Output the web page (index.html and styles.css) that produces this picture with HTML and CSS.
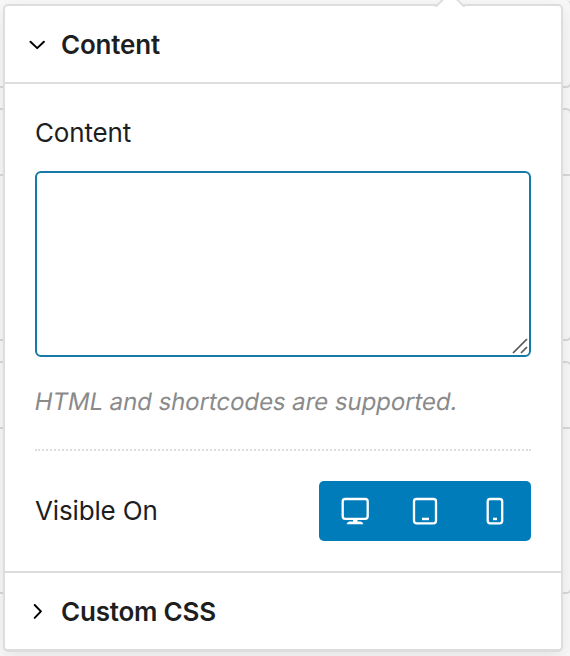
FILE: index.html
```html
<!DOCTYPE html>
<html lang="en">
<head>
<meta charset="utf-8">
<title>Content options</title>
<link rel="stylesheet" href="styles.css">
</head>
<body>
<div class="backdrop">
  <div class="card card-first"></div>
  <div class="card"><div class="card-head"></div></div>
  <div class="card"><div class="card-head"></div></div>
</div>
<main class="panel">
  <svg class="arrow" width="30" height="8" viewBox="0 0 30 8"><path d="M0 8 8 0h14l8 8z" fill="#fff"/><path d="M0 7h1.500l7-7M30 7h-1.500l-7-7" fill="none" stroke="#ddd" stroke-width="2"/></svg>
  <header class="section-head">
    <svg class="chevron" width="20" height="20" viewBox="0 0 20 20"><path d="m3.500 6.700 6.700 6.400 6.700-6.400"/></svg>
    <span class="title title-content">Content</span>
  </header>
  <section class="body">
    <label class="label label-content" for="content">Content</label>
    <div class="field">
      <textarea id="content"></textarea>
      <svg class="grip" width="16" height="16" viewBox="0 0 16 16"><path d="M1 15 15 1M9 15l6-6"/></svg>
    </div>
    <p class="hint"><span class="slant">HTML and shortcodes are supported.</span></p>
    <div class="visibility">
      <span class="label label-visible">Visible On</span>
      <div class="devices">
        <div class="device"><svg width="28" height="28" viewBox="0 0 28 28"><rect x="1.700" y="2" width="25" height="19.800" rx="2.500"/><path class="solid" d="M12 22h4.500v2.600h3q2 0 3 2.700h-17q1-2.700 3-2.700h3.500z"/></svg></div>
        <div class="device"><svg width="28" height="28" viewBox="0 0 28 28"><rect x="3" y="2" width="22" height="24.300" rx="2.500"/><path class="solid" d="M11 20.700h7v2.500h-7z"/></svg></div>
        <div class="device"><svg width="28" height="28" viewBox="0 0 28 28"><rect x="6.700" y="2" width="14.500" height="24.300" rx="2.500"/><path class="solid" d="M12 20.700h4v2.500h-4z"/></svg></div>
      </div>
    </div>
  </section>
  <footer class="section-head">
    <svg class="chevron" width="20" height="20" viewBox="0 0 20 20"><path d="m7.700 3 6.200 6.400-6.200 6.500"/></svg>
    <span class="title title-css">Custom CSS</span>
  </footer>
</main>
</body>
</html>
```
FILE: styles.css
```css
* { box-sizing: border-box; }
body {
  margin: 0;
  height: 656px;
  position: relative;
  overflow: hidden;
  background: #f9f9f9;
  color: #1e1e1e;
  font: 26px/32px Inter, "Liberation Sans", sans-serif;
}
.backdrop { display: flex; flex-direction: column; gap: 20px; margin: 0 -2px 0 -10px; }
.card { height: 233px; border: 2px solid #d9d9d9; border-radius: 6px; background: #f8f8f8; }
.card-first { height: 88px; border-top: 0; }
.card-head { height: 66px; border-bottom: 2px solid #d9d9d9; }
.panel {
  position: absolute;
  left: 3px;
  top: 4px;
  width: 560px;
  height: 648px;
  display: flex;
  flex-direction: column;
  background: #fff;
  border: 2px solid #ddd;
  border-bottom-width: 3px;
  border-radius: 5px;
  box-shadow: 0 6px 20px rgba(0, 0, 0, .09);
}
.arrow { position: absolute; left: 430px; top: -7px; }
.section-head { height: 76px; display: flex; align-items: center; padding: 2px 22px 0; }
.chevron { flex: none; margin-right: 14px; fill: none; stroke: #000; stroke-width: 2; stroke-linecap: round; stroke-linejoin: round; }
.title { font-weight: 560; white-space: nowrap; }
.title-content { letter-spacing: -.2px; }
.title-css { letter-spacing: -.22px; }
.body { height: 491px; padding: 33px 30px 30px; border: solid #ddd; border-width: 2px 0; }
.label { display: block; white-space: nowrap; letter-spacing: -.15px; }
.field { position: relative; height: 186px; margin-top: 22px; }
textarea { display: block; width: 100%; height: 100%; margin: 0; border: 2px solid #1679a8; border-radius: 6px; background: #fff; resize: none; outline: 0; }
.grip { position: absolute; right: 3px; bottom: 3px; fill: none; stroke: #555; stroke-width: 1.700; }
.hint { height: 94px; margin: 0; padding-top: 29px; border-bottom: 2px dotted #ddd; color: #8a8a8a; font-size: 24px; white-space: nowrap; }
.slant { display: inline-block; transform: skewX(-10deg); letter-spacing: -.07px; }
.visibility { display: flex; justify-content: space-between; align-items: center; padding-top: 30px; }
.devices { display: flex; width: 212px; height: 60px; padding: 0 1px; border-radius: 5px; background: #007cba; }
.device { flex: 1; display: flex; align-items: center; justify-content: center; }
.device svg { fill: none; stroke: #fff; stroke-width: 2.300; }
.device .solid { fill: #fff; stroke: none; }
```
